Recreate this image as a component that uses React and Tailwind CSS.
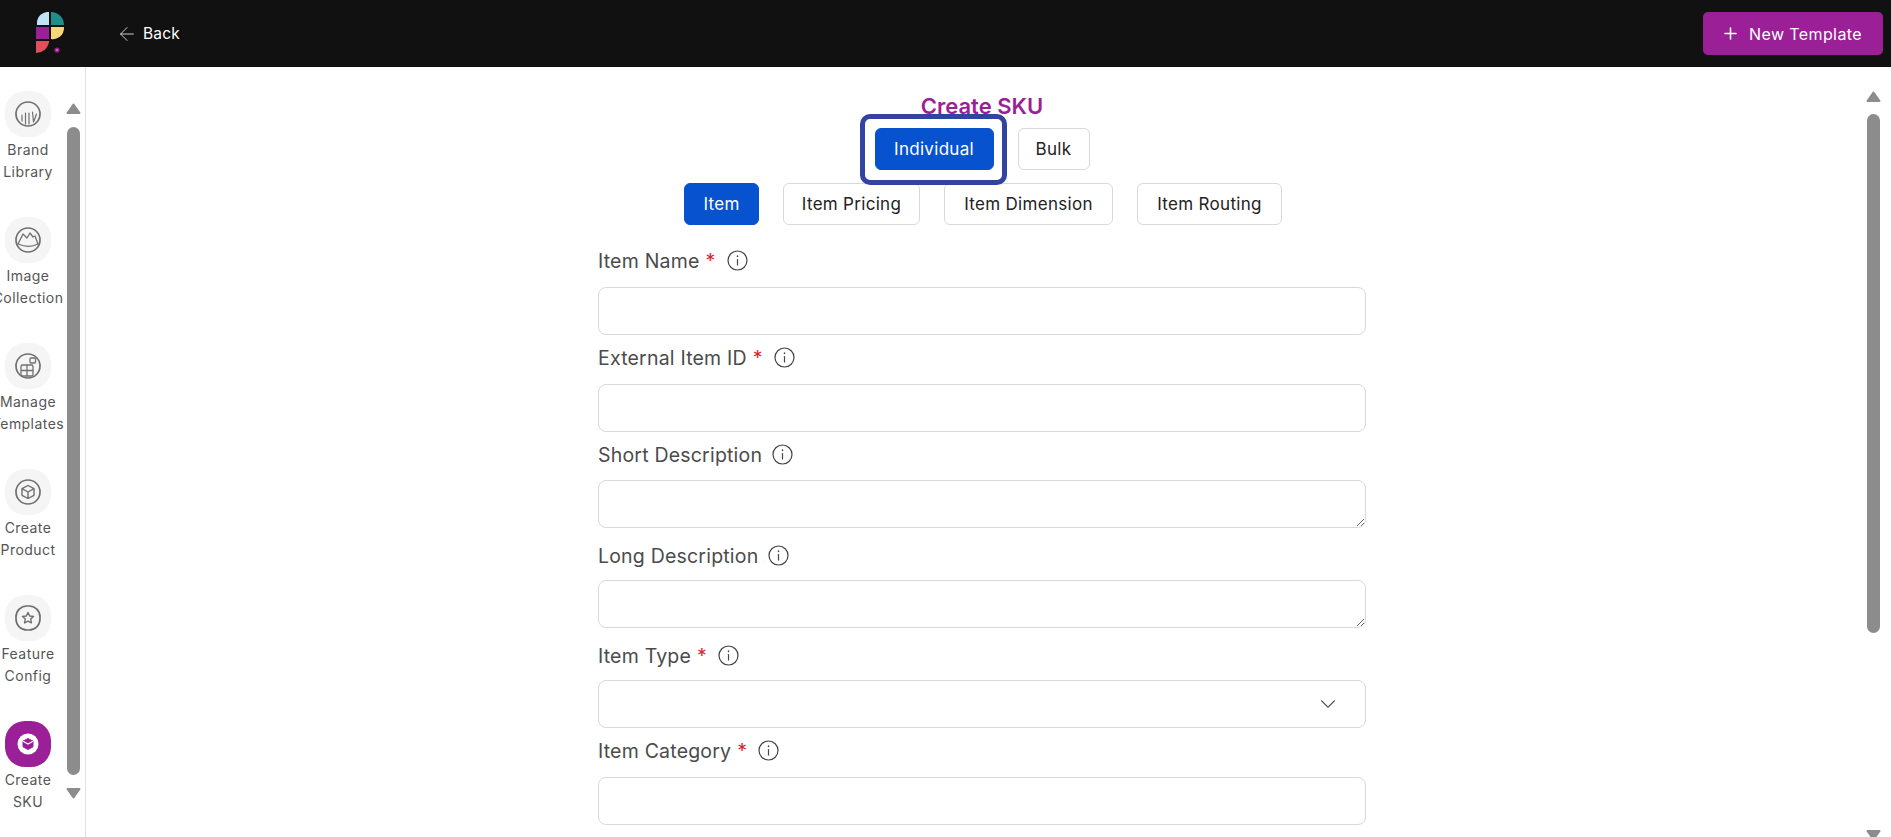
import React from 'react'
import { ArrowLeft, ChevronDown, Plus } from 'lucide-react'

const Logo = () => (
  <svg width="30" height="44" viewBox="0 0 30 44" className="shrink-0">
    <path d="M1 13V11A11 11 0 0 1 13 0V13Z" fill="#bfe3f7" />
    <path d="M15 0A13 13 0 0 1 28 13H15Z" fill="#1f9089" />
    <rect x="0" y="15" width="13" height="12" fill="#9b1f96" />
    <path d="M15 15H28V16A11 11 0 0 1 15 27Z" fill="#f6d676" />
    <path d="M0 29H13V30A13 13 0 0 1 0 41Z" fill="#e0505a" />
    <circle cx="21" cy="38" r="2.600" fill="#9b1f96" />
    <circle cx="21" cy="38" r="0.800" fill="#e6b8e4" />
  </svg>
)

const BrandIcon = () => (
  <svg width="28" height="28" viewBox="0 0 28 28" fill="none" stroke="currentColor" strokeWidth="1.700" strokeLinecap="round">
    <circle cx="14" cy="14" r="12" />
    <path d="M8 15v6M11.500 13v11M15 13v11M18.500 12l1 10M22.500 14l-2.500 7" strokeWidth="1.200" />
  </svg>
)
const ImageIcon = () => (
  <svg width="28" height="28" viewBox="0 0 28 28" fill="none" stroke="currentColor" strokeWidth="1.700" strokeLinejoin="round">
    <circle cx="14" cy="14" r="12" />
    <path d="M4 18l5-10 4 4 3-5 3 4 2-1 3 8c-6 3-13 3-20 0Z" strokeWidth="1.300" />
  </svg>
)
const TemplatesIcon = () => (
  <svg width="28" height="28" viewBox="0 0 28 28" fill="none" stroke="currentColor" strokeWidth="1.700">
    <circle cx="14" cy="14" r="12" />
    <rect x="7" y="13" width="12" height="11" rx="1.500" strokeWidth="1.300" />
    <path d="M13 13v11M7 18.500h12" strokeWidth="1.300" />
    <rect x="16" y="6" width="5.500" height="5" rx="1" strokeWidth="1.300" />
  </svg>
)
const BoxIcon = () => (
  <svg width="28" height="28" viewBox="0 0 28 28" fill="none" stroke="currentColor" strokeWidth="1.700" strokeLinejoin="round">
    <circle cx="14" cy="14" r="12" />
    <path d="M14 7.500l6 3.200v6.600l-6 3.200-6-3.200v-6.600ZM8 10.700l6 3.300 6-3.300M14 14v6.500" strokeWidth="1.400" />
  </svg>
)
const StarIcon = () => (
  <svg width="28" height="28" viewBox="0 0 28 28" fill="none" stroke="currentColor" strokeWidth="1.700" strokeLinejoin="round">
    <rect x="2" y="2" width="24" height="24" rx="11" />
    <path d="M14 8.500l1.700 3.500 3.800.5-2.800 2.600.7 3.800-3.400-1.800-3.400 1.800.7-3.800-2.800-2.600 3.800-.5Z" strokeWidth="1.400" />
  </svg>
)
const SkuIcon = () => (
  <svg width="24" height="24" viewBox="0 0 24 24">
    <circle cx="12" cy="12" r="10.500" fill="#fff" />
    <path d="M12 6.500l5 2.700v5.600l-5 2.700-5-2.700V9.200Z" fill="#9b1f96" stroke="#9b1f96" strokeLinejoin="round" />
    <path d="M7 9.200l5 2.800 5-2.800" fill="none" stroke="#fff" strokeWidth="1.200" />
  </svg>
)

const navItems = [
  { lines: ['Brand', 'Library'], icon: <BrandIcon /> },
  { lines: ['Image', 'Collection'], icon: <ImageIcon /> },
  { lines: ['Manage', 'Templates'], icon: <TemplatesIcon /> },
  { lines: ['Create', 'Product'], icon: <BoxIcon /> },
  { lines: ['Feature', 'Config'], icon: <StarIcon /> },
  { lines: ['Create', 'SKU'], icon: <SkuIcon />, active: true },
]

const NavItem = ({ item }) => (
  <div className="flex h-[126px] w-[46px] shrink-0 flex-col items-center">
    <div
      className={`flex h-[46px] w-[46px] shrink-0 items-center justify-center rounded-[20px] ${
        item.active ? 'bg-[#9b1f96]' : 'bg-[#f5f5f6] text-[#707070]'
      }`}
    >
      {item.icon}
    </div>
    <div className="mt-[2px] flex flex-col items-center text-[14px] leading-[22px] tracking-[0.45px] whitespace-nowrap text-[#555]">
      {item.lines.map((line) => (
        <span key={line}>{line}</span>
      ))}
    </div>
  </div>
)

const ArrowUp = () => (
  <svg width="15" height="11" viewBox="0 0 15 11" fill="#8c8c8c" stroke="#8c8c8c" strokeWidth="2" strokeLinejoin="round" className="shrink-0">
    <path d="M7.500 1.500 13.500 10H1.500Z" />
  </svg>
)
const ArrowDown = () => (
  <svg width="15" height="11" viewBox="0 0 15 11" fill="#8c8c8c" stroke="#8c8c8c" strokeWidth="2" strokeLinejoin="round" className="shrink-0">
    <path d="M7.500 9.500 13.500 1H1.500Z" />
  </svg>
)

const InfoIcon = () => (
  <svg width="21" height="21" viewBox="0 0 21 21" fill="none" stroke="#444" strokeWidth="1.200" strokeLinecap="round">
    <circle cx="10.500" cy="10.500" r="9.500" />
    <path d="M10.500 9.500v5.500" />
    <path d="M10.500 6v.6" strokeWidth="1.500" />
  </svg>
)

const Label = ({ text, required, className }) => (
  <div className={`flex items-center pb-[1px] text-[19.5px] tracking-[0.2px] text-[#4b4b4b] ${className}`}>
    <span>{text}</span>
    {required && <span className="ml-[6px] text-[#d8232f]">*</span>}
    <span className={`mb-[3px] ${required ? 'ml-[11px]' : 'ml-[10px]'}`}>
      <InfoIcon />
    </span>
  </div>
)

const fieldClass = 'w-full h-[48px] rounded-[8px] border border-[#d9d9d9] bg-white'

const Button = ({ children, active, className = '' }) => (
  <button
    className={`flex h-[42px] items-center justify-center rounded-[6px] border pt-[2px] text-[17px] tracking-[0.3px] ${
      active ? 'border-[#0652cf] bg-[#0652cf] text-white' : 'border-[#d9d9d9] bg-white text-[#222]'
    } ${className}`}
  >
    {children}
  </button>
)

export default function App() {
  return (
    <div className="flex h-screen w-full flex-col overflow-hidden bg-white font-['Inter',sans-serif]">
      <header className="flex h-[67px] shrink-0 items-center bg-[#111111] pr-[8px]">
        <div className="ml-[36px]">
          <Logo />
        </div>
        <button className="ml-[50px] flex items-center text-[15.5px] text-white">
          <ArrowLeft size={22} strokeWidth={1} className="text-[#ddd]" />
          <span className="ml-[5px] tracking-[0.2px]">Back</span>
        </button>
        <button className="ml-auto flex h-[43px] w-[180px] items-center rounded-[5px] bg-[#9b1f96] pl-[18px] text-[16px] tracking-[0.4px] text-white">
          <Plus size={19} strokeWidth={2} />
          <span className="ml-[9px]">New Template</span>
        </button>
      </header>

      <div className="flex min-h-0 flex-1">
        <aside className="flex w-[86px] shrink-0 border-r border-[#e2e2e2]">
          <nav className="flex w-[66px] shrink-0 flex-col pt-[24px] pl-[5px]">
            {navItems.map((item) => (
              <NavItem key={item.lines.join()} item={item} />
            ))}
          </nav>
          <div className="flex w-[14px] shrink-0 flex-col items-center pt-[36px]">
            <ArrowUp />
            <div className="mt-[13px] h-[648px] w-[13px] shrink-0 rounded-full bg-[#8c8c8c]" />
            <div className="mt-[13px] shrink-0">
              <ArrowDown />
            </div>
          </div>
        </aside>

        <main className="flex min-w-0 flex-1 overflow-hidden">
          <div className="min-w-0 flex-1 pl-[12px]">
            <div className="flex flex-col items-center pt-[23px]">
              <h1 className="h-[33px] text-[22px] leading-[33px] font-semibold text-[#9b1f96]">Create SKU</h1>
              <div className="relative mt-[5px] flex gap-[24px]">
                <Button active className="w-[119px]">
                  Individual
                </Button>
                <Button className="w-[72px]">Bulk</Button>
                {/* tour highlight around the active button */}
                <div className="absolute top-[-14px] left-[-15px] h-[71px] w-[147px] rounded-[10px] border-[5px] border-[#3344a0]" />
              </div>
              <div className="mt-[13px] ml-[2px] flex gap-[24px]">
                <Button active className="w-[75px]">
                  Item
                </Button>
                <Button className="w-[137px]">Item Pricing</Button>
                <Button className="w-[169px]">Item Dimension</Button>
                <Button className="w-[145px]">Item Routing</Button>
              </div>
              <form className="mt-[13px] w-[768px]">
                <Label text="Item Name" required className="h-[49px]" />
                <input className={`${fieldClass} block`} />
                <Label text="External Item ID" required className="h-[49px]" />
                <input className={`${fieldClass} block`} />
                <Label text="Short Description" className="h-[48px]" />
                <textarea className={fieldClass} />
                <Label text="Long Description" className="h-[46px]" />
                <textarea className={fieldClass} />
                <Label text="Item Type" required className="h-[46px]" />
                <div className={`${fieldClass} flex items-center justify-end pr-[24px] text-[#555]`}>
                  <ChevronDown size={26} strokeWidth={1} />
                </div>
                <Label text="Item Category" required className="h-[49px]" />
                <input className={`${fieldClass} block`} />
              </form>
            </div>
          </div>
          <div className="mr-[11px] flex w-[14px] shrink-0 flex-col items-center pt-[24px]">
            <ArrowUp />
            <div className="mt-[12px] h-[519px] w-[13px] shrink-0 rounded-full bg-[#8c8c8c]" />
            <div className="mt-[197px] shrink-0">
              <ArrowDown />
            </div>
          </div>
        </main>
      </div>
    </div>
  )
}
